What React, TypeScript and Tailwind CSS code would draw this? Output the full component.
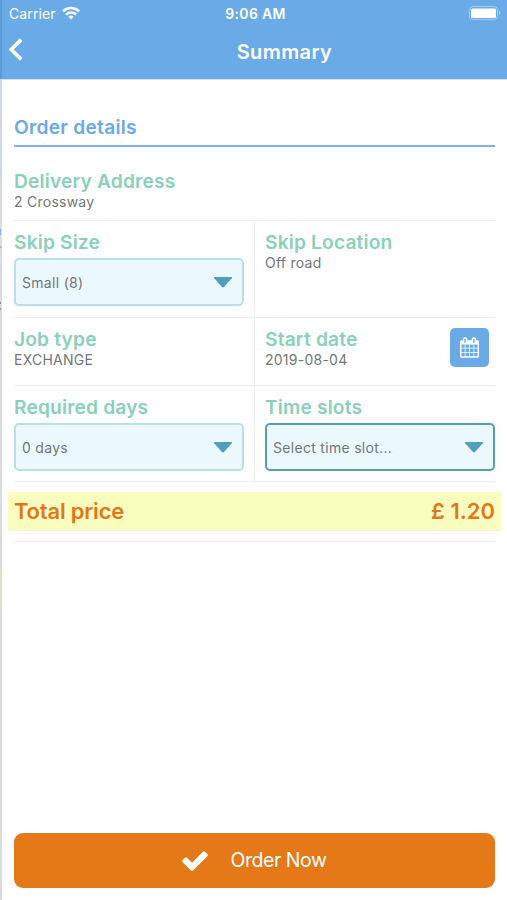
import React from 'react';

const LABEL = 'text-[19.2px] leading-6 font-semibold tracking-[0.16px] text-[#8ad0bb]';
const VALUE = 'text-[14px] leading-[18px] tracking-[0.25px] text-[#737679]';

function WifiIcon() {
  return (
    <svg viewBox="0 0 18 14" className="mb-px w-[18px] h-[14px]" fill="none" stroke="#fff" strokeWidth="2.5">
      <path d="M1 5.3a11.5 11.5 0 0 1 16 0" />
      <path d="M3.9 8.6a7.3 7.3 0 0 1 10.2 0" />
      <path d="M9 13.4l-2.6-2.7a3.8 3.8 0 0 1 5.2 0z" fill="#fff" stroke="none" />
    </svg>
  );
}

function BatteryIcon() {
  return (
    <svg viewBox="0 0 32 14" className="mb-px w-8 h-[14px]">
      <rect x="0.5" y="0.5" width="28" height="13" rx="3.5" fill="none" stroke="#fff" strokeOpacity="0.4" />
      <rect x="2" y="2.500" width="25" height="9.500" rx="1.500" fill="#fff" />
      <path d="M30 5v4q1.4-.7 1.4-2t-1.4-2z" fill="#fff" fillOpacity="0.5" />
    </svg>
  );
}

function CalendarIcon() {
  return (
    <svg viewBox="64 0 1664 1792" className="mb-px w-[19px] h-[21px]" fill="#fff">
      <path d="M192 1664h288v-288h-288v288zm352 0h320v-288h-320v288zm-352-352h288v-320h-288v320zm352 0h320v-320h-320v320zm-352-384h288v-288h-288v288zm736 736h320v-288h-320v288zm-384-736h320v-288h-320v288zm768 736h288v-288h-288v288zm-384-352h320v-320h-320v320zm-352-864v-288q0-13-9.5-22.5t-22.5-9.5h-64q-13 0-22.5 9.5t-9.5 22.5v288q0 13 9.5 22.5t22.5 9.5h64q13 0 22.5-9.5t9.5-22.5zm736 864h288v-320h-288v320zm-384-384h320v-288h-320v288zm384 0h288v-288h-288v288zm32-480v-288q0-13-9.5-22.5t-22.5-9.5h-64q-13 0-22.5 9.5t-9.5 22.5v288q0 13 9.5 22.5t22.5 9.5h64q13 0 22.5-9.5t9.5-22.5zm384-64v1280q0 52-38 90t-90 38h-1408q-52 0-90-38t-38-90v-1280q0-52 38-90t90-38h128v-96q0-66 47-113t113-47h64q66 0 113 47t47 113v96h384v-96q0-66 47-113t113-47h64q66 0 113 47t47 113v96h128q52 0 90 38t38 90z" />
    </svg>
  );
}

function CheckIcon() {
  return (
    <svg viewBox="121 310 1550 1212" className="w-[26px] h-5" fill="#fff">
      <path d="M1671 566q0 40-28 68l-724 724-136 136q-28 28-68 28t-68-28l-136-136-362-362q-28-28-28-68t28-68l136-136q28-28 68-28t68 28l294 295 656-657q28-28 68-28t68 28l136 136q28 28 28 68z" />
    </svg>
  );
}

function Select({ value, active = false }: { value: string; active?: boolean }) {
  return (
    <button
      className={`flex h-12 w-[230px] items-center justify-between rounded-[5px] border-2 bg-[#ebf9ff] pl-[6px] pr-[9px] ${
        active ? 'border-[#559db5]' : 'border-[#b9dfea]'
      }`}
    >
      <span className="text-[14px] tracking-[0.3px] text-[#737679]">{value}</span>
      <svg viewBox="0 0 20 11" className="w-5 h-[11px]" fill="#519fbb">
        <path d="M1.500 0h17q1.200.2.300 1.300l-7.500 8.500q-1.300 1.200-2.600 0L1.200 1.300Q.3.2 1.500 0z" />
      </svg>
    </button>
  );
}

export default function App() {
  return (
    <div className="flex h-[900px] w-[507px] overflow-hidden bg-white font-['Inter',sans-serif]">
      {/* Edge of the previous screen */}
      <div className="flex w-[2px] shrink-0 flex-col bg-[#dcdcde]">
        <div className="h-[79px] bg-[#5f9bd6]" />
        <div className="h-[104px] bg-[#d0d8e5]" />
        <div className="mt-[46px] h-[6px] w-px bg-[#8fb0d8]" />
        <div className="mt-[11px] h-[2px] w-px bg-[#b0b2b4]" />
        <div className="mt-[54px] h-[2px] w-px bg-[#8c8e90]" />
        <div className="mt-[4px] h-[2px] w-px bg-[#8c8e90]" />
        <div className="mt-[262px] h-[37px] bg-[#dfe4bd]" />
      </div>

      <div className="flex w-[505px] flex-col">
        <header className="h-[80px] shrink-0 border-b border-[#cfe3f7] bg-[#6aaae7] text-white">
          <div className="grid h-[27px] grid-cols-3 items-center pl-[7px] pr-[6px]">
            <div className="flex items-center gap-[6px]">
              <span className="text-[14px] tracking-[0.1px]">Carrier</span>
              <WifiIcon />
            </div>
            <span className="pl-px text-center text-[14px] font-semibold tracking-[0.3px]">9:06 AM</span>
            <div className="flex justify-end">
              <BatteryIcon />
            </div>
          </div>
          <div className="grid h-[50px] grid-cols-[60px_1fr_60px] items-center">
            <button aria-label="Back" className="pl-[6px]">
              <svg viewBox="0 0 15 23" className="mb-[6px] h-[23px] w-[15px]" fill="none" stroke="#fff" strokeWidth="3.6">
                <path d="M13.200 1.600L3.200 11.500l10 9.900" />
              </svg>
            </button>
            <h1 className="pl-[60px] text-center text-[20px] font-semibold tracking-[0.4px]">Summary</h1>
          </div>
        </header>

        <main className="flex flex-1 flex-col pl-3 pr-3">
          <h2 className="mt-[34px] h-[33px] border-b-2 border-[#7eb4e5] text-[19.2px] leading-[26px] font-semibold tracking-[0.25px] text-[#6aaae7]">
            Order details
          </h2>

          <section className="h-[74px] border-b border-[#eeeeee] pt-[22px]">
            <h3 className={LABEL}>Delivery Address</h3>
            <p className={VALUE}>2 Crossway</p>
          </section>

          <div className="grid h-[97px] grid-cols-[241px_1fr] border-b border-[#eeeeee]">
            <section className="border-r border-[#eeeeee] pt-[9px]">
              <h3 className={LABEL}>Skip Size</h3>
              <div className="mt-1">
                <Select value="Small (8)" />
              </div>
            </section>
            <section className="pl-[10px] pt-[9px]">
              <h3 className={LABEL}>Skip Location</h3>
              <p className={VALUE}>Off road</p>
            </section>
          </div>

          <div className="grid h-[68px] grid-cols-[241px_1fr] border-b border-[#eeeeee]">
            <section className="border-r border-[#eeeeee] pt-[9px]">
              <h3 className={LABEL}>Job type</h3>
              <p className={VALUE}>EXCHANGE</p>
            </section>
            <section className="flex justify-between pl-[10px] pr-[6px]">
              <div className="pt-[9px]">
                <h3 className={LABEL}>Start date</h3>
                <p className={VALUE}>2019-08-04</p>
              </div>
              <button aria-label="Pick date" className="mt-[10px] flex h-[39px] w-[39px] items-center justify-center rounded-[5px] bg-[#6aaae7]">
                <CalendarIcon />
              </button>
            </section>
          </div>

          <div className="grid h-[96px] grid-cols-[241px_1fr] border-b border-[#eeeeee]">
            <section className="border-r border-[#eeeeee] pt-[9px]">
              <h3 className={LABEL}>Required days</h3>
              <div className="mt-1">
                <Select value="0 days" />
              </div>
            </section>
            <section className="pl-[10px] pt-[9px]">
              <h3 className={LABEL}>Time slots</h3>
              <div className="mt-1">
                <Select value="Select time slot..." active />
              </div>
            </section>
          </div>

          <div className="-mx-[6px] mt-[10px] flex h-[39px] items-center justify-between border-b border-[#eeeeee] bg-[#f9febf] px-[6px] text-[22px] font-semibold text-[#e27719]">
            <span className="tracking-[-0.2px]">Total price</span>
            <span>£ 1.20</span>
          </div>
          <div className="h-[11px] border-b border-[#eeeeee]" />

          <button className="mt-auto mb-3 flex h-[55px] items-center justify-center gap-[22px] rounded-[9px] bg-[#e57817] text-white">
            <CheckIcon />
            <span className="text-[19.5px] tracking-[-0.45px]">Order Now</span>
          </button>
        </main>
      </div>
    </div>
  );
}
